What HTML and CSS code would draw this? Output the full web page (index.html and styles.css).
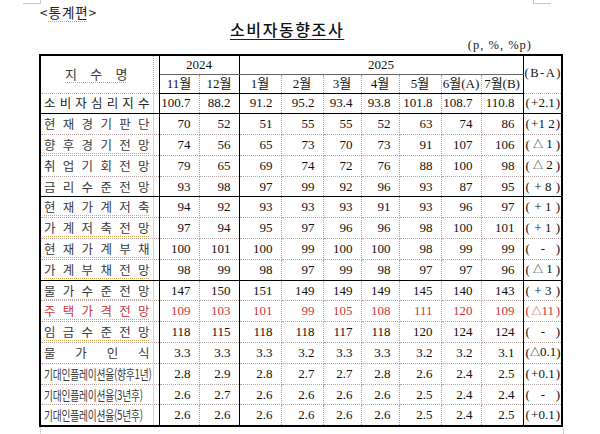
FILE: index.html
```html
<!DOCTYPE html>
<html lang="ko">
<head>
<meta charset="utf-8">
<title>소비자동향조사</title>
<link rel="stylesheet" href="styles.css">
</head>
<body>
<div class="page">
  <div class="mark mark-tl"></div>
  <div class="mark mark-tr"></div>
  <div class="mark mark-bl"></div>
  <div class="mark mark-br"></div>

  <div class="label">&lt;<span class="sp">통계편</span>&gt;</div>
  <div class="title"><span>소비자동향조사</span></div>
  <div class="unit">(p, %, %p)</div>

  <table class="grid">
    <colgroup>
      <col class="c-name"><col class="c40"><col class="c40">
      <col class="c42"><col class="c42"><col class="c38"><col class="c38">
      <col class="c42"><col class="c40"><col class="c42"><col class="c39">
    </colgroup>
    <thead>
      <tr class="hr">
        <th class="name head-name" rowspan="2"><span class="sp">지 수 명</span></th>
        <th colspan="2" class="yr">2024</th>
        <th colspan="7" class="yr sl">2025</th>
        <th rowspan="2" class="ba-h sl">(B-A)</th>
      </tr>
      <tr class="hr">
        <th>11월</th><th>12월</th>
        <th class="sl">1월</th><th>2월</th><th>3월</th><th>4월</th><th>5월</th><th>6월(A)</th><th>7월(B)</th>
      </tr>
    </thead>
    <tbody>
      <tr class="sb">
        <td class="name first">소 비 자 심 리 지 수</td>
        <td>100.7</td><td>88.2</td>
        <td class="sl">91.2</td><td>95.2</td><td>93.4</td><td>93.8</td><td>101.8</td><td>108.7</td><td>110.8</td>
        <td class="ba sl"><span class="d"><i>(</i><b>+2.1</b><i>)</i></span></td>
      </tr>
      <tr>
        <td class="name">현 재 경 기 판 단</td>
        <td>70</td><td>52</td>
        <td class="sl">51</td><td>55</td><td>55</td><td>52</td><td>63</td><td>74</td><td>86</td>
        <td class="ba sl"><span class="d"><i>(</i><b>+1 2</b><i>)</i></span></td>
      </tr>
      <tr>
        <td class="name"><span class="sp">향 후 경 기 전 망</span></td>
        <td>74</td><td>56</td>
        <td class="sl">65</td><td>73</td><td>70</td><td>73</td><td>91</td><td>107</td><td>106</td>
        <td class="ba sl"><span class="d"><i>(</i><b><span class="tri">△</span> 1</b><i>)</i></span></td>
      </tr>
      <tr>
        <td class="name">취 업 기 회 전 망</td>
        <td>79</td><td>65</td>
        <td class="sl">69</td><td>74</td><td>72</td><td>76</td><td>88</td><td>100</td><td>98</td>
        <td class="ba sl"><span class="d"><i>(</i><b><span class="tri">△</span> 2</b><i>)</i></span></td>
      </tr>
      <tr class="sb">
        <td class="name">금 리 수 준 전 망</td>
        <td>93</td><td>98</td>
        <td class="sl">97</td><td>99</td><td>92</td><td>96</td><td>93</td><td>87</td><td>95</td>
        <td class="ba sl"><span class="d"><i>(</i><b>+ 8</b><i>)</i></span></td>
      </tr>
      <tr>
        <td class="name"><span class="sp">현 재 가 계 저 축</span></td>
        <td>94</td><td>92</td>
        <td class="sl">93</td><td>93</td><td>93</td><td>91</td><td>93</td><td>96</td><td>97</td>
        <td class="ba sl"><span class="d"><i>(</i><b>+ 1</b><i>)</i></span></td>
      </tr>
      <tr>
        <td class="name"><span class="sp">가 계 저 축 전 망</span></td>
        <td>97</td><td>94</td>
        <td class="sl">95</td><td>97</td><td>96</td><td>96</td><td>98</td><td>100</td><td>101</td>
        <td class="ba sl"><span class="d"><i>(</i><b>+ 1</b><i>)</i></span></td>
      </tr>
      <tr>
        <td class="name"><span class="sp">현 재 가 계 부 채</span></td>
        <td>100</td><td>101</td>
        <td class="sl">100</td><td>99</td><td>100</td><td>100</td><td>98</td><td>99</td><td>99</td>
        <td class="ba sl"><span class="d"><i>(</i><b>-</b><i>)</i></span></td>
      </tr>
      <tr class="sb">
        <td class="name"><span class="sp">가 계 부 채 전 망</span></td>
        <td>98</td><td>99</td>
        <td class="sl">98</td><td>97</td><td>99</td><td>98</td><td>97</td><td>97</td><td>96</td>
        <td class="ba sl"><span class="d"><i>(</i><b><span class="tri">△</span> 1</b><i>)</i></span></td>
      </tr>
      <tr>
        <td class="name"><span class="sp">물 가 수 준 전 망</span></td>
        <td>147</td><td>150</td>
        <td class="sl">151</td><td>149</td><td>149</td><td>149</td><td>145</td><td>140</td><td>143</td>
        <td class="ba sl"><span class="d"><i>(</i><b>+ 3</b><i>)</i></span></td>
      </tr>
      <tr class="red">
        <td class="name"><span class="sp">주 택 가 격 전 망</span></td>
        <td>109</td><td>103</td>
        <td class="sl">101</td><td>99</td><td>105</td><td>108</td><td>111</td><td>120</td><td>109</td>
        <td class="ba sl"><span class="d"><i>(</i><b><span class="tri">△</span>11</b><i>)</i></span></td>
      </tr>
      <tr>
        <td class="name"><span class="sp">임 금 수 준 전 망</span></td>
        <td>118</td><td>115</td>
        <td class="sl">118</td><td>118</td><td>117</td><td>118</td><td>120</td><td>124</td><td>124</td>
        <td class="ba sl"><span class="d"><i>(</i><b>-</b><i>)</i></span></td>
      </tr>
      <tr>
        <td class="name">물 가 인 식</td>
        <td>3.3</td><td>3.3</td>
        <td class="sl">3.3</td><td>3.2</td><td>3.3</td><td>3.3</td><td>3.2</td><td>3.2</td><td>3.1</td>
        <td class="ba sl"><span class="d"><i>(</i><b><span class="tri">△</span>0.1</b><i>)</i></span></td>
      </tr>
      <tr>
        <td class="name"><span class="cond">기대인플레이션율(향후1년)</span></td>
        <td>2.8</td><td>2.9</td>
        <td class="sl">2.8</td><td>2.7</td><td>2.7</td><td>2.8</td><td>2.6</td><td>2.4</td><td>2.5</td>
        <td class="ba sl"><span class="d"><i>(</i><b>+0.1</b><i>)</i></span></td>
      </tr>
      <tr>
        <td class="name"><span class="cond">기대인플레이션율(3년후)</span></td>
        <td>2.6</td><td>2.7</td>
        <td class="sl">2.6</td><td>2.6</td><td>2.6</td><td>2.6</td><td>2.5</td><td>2.4</td><td>2.4</td>
        <td class="ba sl"><span class="d"><i>(</i><b>-</b><i>)</i></span></td>
      </tr>
      <tr>
        <td class="name"><span class="cond">기대인플레이션율(5년후)</span></td>
        <td>2.6</td><td>2.6</td>
        <td class="sl">2.6</td><td>2.6</td><td>2.6</td><td>2.6</td><td>2.5</td><td>2.4</td><td>2.5</td>
        <td class="ba sl"><span class="d"><i>(</i><b>+0.1</b><i>)</i></span></td>
      </tr>
    </tbody>
  </table>
</div>
</body>
</html>
```
FILE: styles.css
```css
* { box-sizing: border-box; }

html, body {
  margin: 0;
  padding: 0;
  background: #fff;
}

body {
  font-family: "Liberation Serif", "Noto Sans CJK KR", serif;
  color: #111;
}

.page {
  position: relative;
  width: 600px;
  height: 434px;
  overflow: hidden;
  display: flex;
  flex-direction: column;
}

/* page corner crop marks */
.mark {
  position: absolute;
  border-color: #c8c8c8;
  border-style: solid;
  border-width: 0;
}
.mark-tl { left: 23px; top: 0; width: 18px; height: 4px; border-right-width: 1px; border-bottom-width: 1px; }
.mark-tr { left: 533px; top: 0; width: 18px; height: 4px; border-left-width: 1px; border-bottom-width: 1px; }
.mark-bl { left: 40px; top: 427px; width: 1px; height: 7px; border-left: 1px dotted #bbb; }
.mark-br { left: 563px; top: 429px; width: 1px; height: 5px; border-left: 1px dotted #bbb; }

.label {
  margin-top: 4px;
  margin-left: 40px;
  height: 16px;
  line-height: 16px;
  font-family: "Noto Sans CJK KR", sans-serif;
  font-size: 13.5px;
  letter-spacing: 1px;
  color: #222;
}

.sp {
  text-decoration: underline dotted #d9a84e;
  text-decoration-thickness: 1px;
  text-underline-offset: 3px;
}

.title {
  height: 18px;
  line-height: 18px;
  padding-left: 230px;
  font-family: "Noto Sans CJK KR", sans-serif;
  font-size: 16px;
  font-weight: 500;
  letter-spacing: 1.6px;
  color: #111;
}
.title span {
  text-decoration: underline solid #222;
  text-decoration-thickness: 1px;
  text-underline-offset: 3px;
}

.unit {
  height: 14px;
  line-height: 14px;
  text-align: right;
  padding-right: 68px;
  font-size: 12.5px;
  letter-spacing: 1px;
  color: #222;
}

.grid {
  margin-top: 2px;
  margin-left: 39px;
  width: 522px;
  table-layout: fixed;
  border-collapse: collapse;
  border: 2px solid #000;
}

.c-name { width: 119px; }
.c40 { width: 40px; }
.c42 { width: 42px; }
.c38 { width: 38px; }
.c39 { width: 39px; }

.grid th,
.grid td {
  border: 1px dotted #b5a3a3;
  padding: 0;
  font-size: 13px;
  font-weight: normal;
  white-space: nowrap;
  overflow: hidden;
}

.grid thead tr.hr { height: 19px; }
.grid thead tr:last-child th { border-bottom: 1px solid #000; }
.grid th.yr { border-bottom: 1px solid #666; }

.grid th {
  text-align: center;
  line-height: 17px;
}

.grid tbody tr { height: 20.8px; }
.grid tbody td {
  text-align: right;
  padding-right: 8px;
  line-height: 18px;
}

.grid tr.sb td { border-bottom: 1px solid #000; }
.grid .sl { border-left: 1px solid #000; }

.grid .name {
  border-right: 1px solid #000;
  text-align: justify;
  text-align-last: justify;
  padding: 0 9px 0 3px;
  font-family: "Noto Sans CJK KR", sans-serif;
  font-size: 12.5px;
  color: #3a3a3a;
  background-image: linear-gradient(#b5a3a3 50%, transparent 50%);
  background-size: 1px 2px;
  background-repeat: repeat-y;
  background-position: right 5px top;
}
.grid tbody td.name { padding-right: 9px; text-align: justify; }
.grid tbody td.name.first { color: #222; }

.grid th.head-name {
  padding: 0 31px 2px 24px;
  font-size: 13px;
}

.cond {
  display: inline-block;
  font-size: 13px;
  letter-spacing: -0.3px;
  transform: scaleX(0.75);
  transform-origin: left center;
  text-align: left;
}
.grid tbody td.name:has(.cond) { text-align-last: left; }

.grid td.ba {
  padding: 0 1px 0 2px;
  text-align: center;
}
.d {
  display: flex;
  justify-content: space-between;
  align-items: center;
}
.d i, .d b {
  font-style: normal;
  font-weight: normal;
}
.d b { flex: 1; text-align: center; white-space: pre; }
.tri { font-size: 10px; }

.grid th.ba-h {
  font-size: 12.5px;
  letter-spacing: 1.5px;
  padding: 0 0 2px 1px;
}

.red td { color: #c4393c; }
.grid .red td.name { color: #c4393c; }
```
